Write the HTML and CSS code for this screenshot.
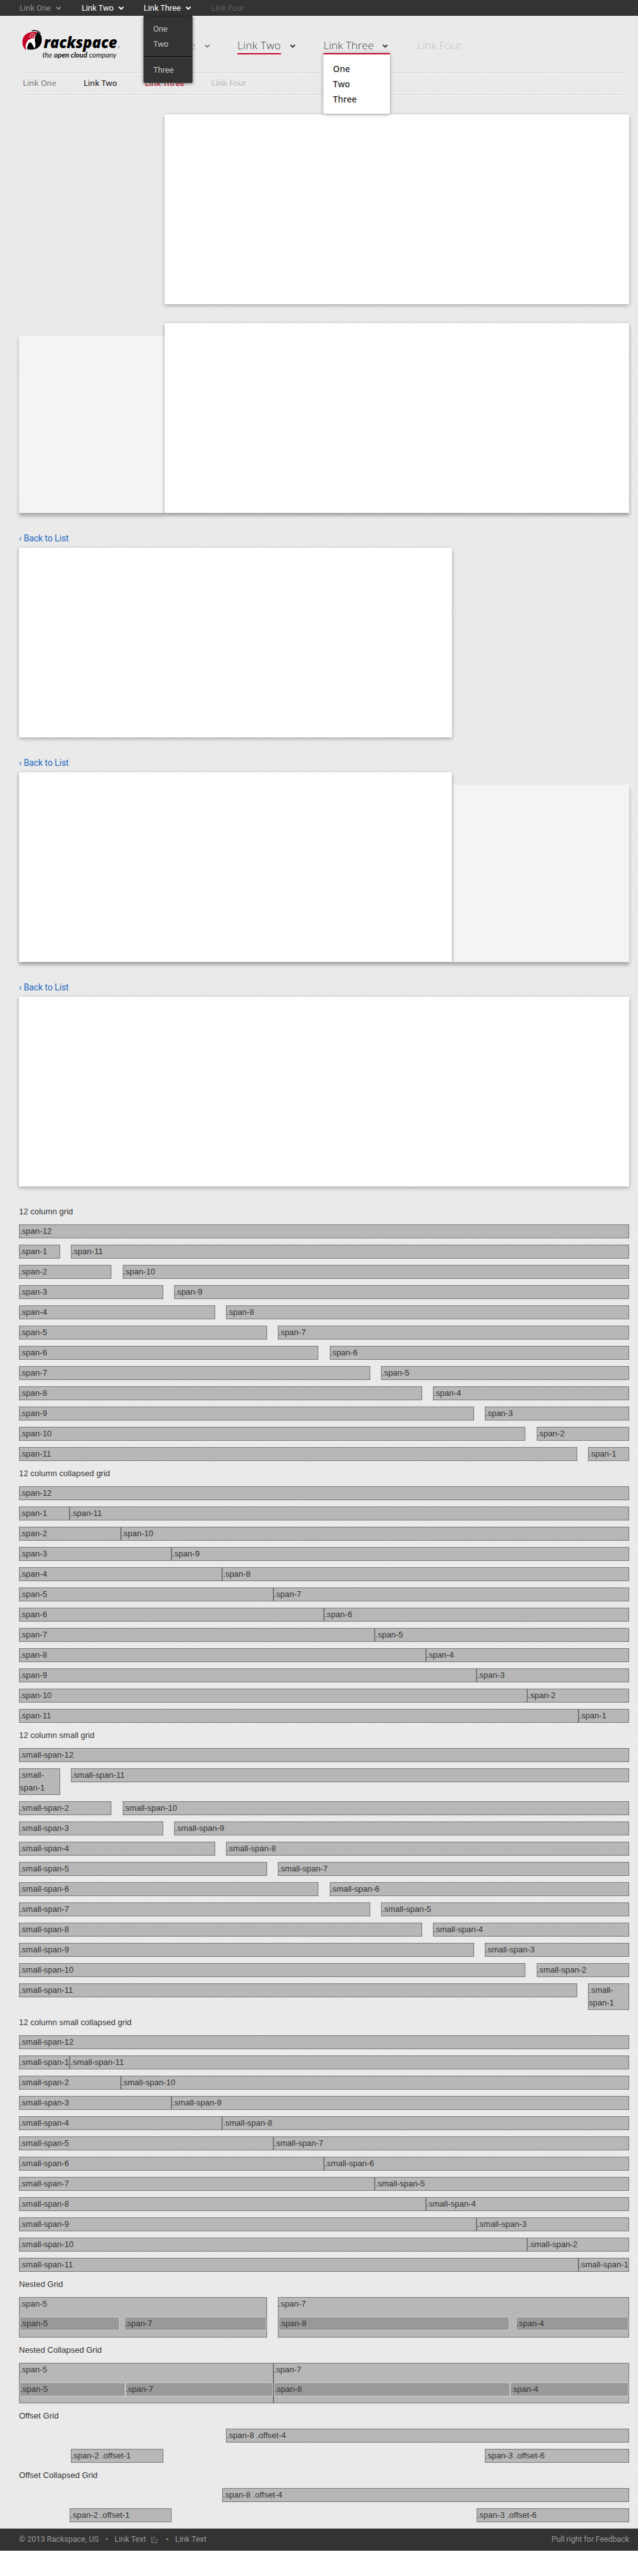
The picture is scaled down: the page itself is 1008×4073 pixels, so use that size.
FILE: index.html
```html
<!DOCTYPE html>
<html lang="en">
<head>
<meta charset="utf-8">
<title>Rackspace</title>
<link rel="stylesheet" href="styles.css">
</head>
<body>
<svg class="defs" width="0" height="0"><defs><symbol id="chevron" viewBox="0 0 9 6"><path d="M1 1l3.5 3.3L8 1" fill="none" stroke="currentColor" stroke-width="2"/></symbol></defs></svg>
<div class="page">
  <nav class="utility">
    <a class="utility-item muted">Link One <svg class="chev"><use href="#chevron"/></svg></a>
    <a class="utility-item active">Link Two <svg class="chev"><use href="#chevron"/></svg></a>
    <div class="utility-item active wide"><a>Link Three</a> <svg class="chev"><use href="#chevron"/></svg>
      <div class="utility-menu"><a>One</a><a>Two</a><hr><a>Three</a></div>
    </div>
    <a class="utility-item disabled">Link Four</a>
  </nav>
  <header class="header">
    <svg class="logo" width="160" height="50" viewBox="0 0 160 50">
      <path d="M28 3.500C33 6 35.500 11 35 17C34 27 27 31.500 18 31.500C15 31.500 13 31 11 30L15 17Z" fill="#000"/>
      <path d="M10.500 32.500C4 28 2.500 17 7 10.500C11 5 18 2.500 28 4L24 9C22 13 18 14 15 17C11 21 10 26 10.500 32.500Z" fill="#c40022"/>
      <path d="M28 4C25.500 8 24 12 24 17C25 21 26 25 23.500 30L21.500 26C20 22 17.500 19 15.500 20.500C13 22.500 12 26 11.500 30.500L10.500 32.500C8.500 26 10 20 14 16C19 14 24 10 28 4Z" fill="#fff"/>
      <circle cx="20.500" cy="9.500" r="4.200" fill="#c40022"/>
      <path d="M16.500 13C15.500 8 19 5 22 6.500C25 8.500 23 13 20.500 12C19 11 19.500 8.500 21 9" fill="none" stroke="#fff" stroke-width="1"/>
      <path d="M19 2C24 .3 30 1.500 33 6" fill="none" stroke="#000" stroke-width="1.300"/>
      <text class="logo-name" x="38" y="29" textLength="116" lengthAdjust="spacingAndGlyphs">rackspace</text>
      <text class="logo-dot" x="154.500" y="30">®</text>
      <text class="logo-tag" x="36" y="44" textLength="117" lengthAdjust="spacingAndGlyphs">the <tspan font-weight="700">open cloud</tspan> company</text>
    </svg>
    <nav class="primary">
      <div class="primary-item one muted"><a>Link One</a><svg class="chev"><use href="#chevron"/></svg></div>
      <div class="primary-item two"><a class="current">Link Two</a><svg class="chev"><use href="#chevron"/></svg></div>
      <div class="primary-item three"><a>Link Three</a><svg class="chev"><use href="#chevron"/></svg>
        <div class="primary-menu"><a>One</a><a>Two</a><a>Three</a></div>
      </div>
      <div class="primary-item disabled"><a>Link Four</a></div>
    </nav>
  </header>
  <nav class="secondary">
    <a class="muted">Link One</a><a>Link Two</a><a class="selected">Link Three</a><a class="disabled">Link Four</a>
  </nav>
  <main class="content">
    <section class="panels right"><div class="panel"></div></section>
    <section class="panels joined"><aside class="side left"></aside><div class="panel"></div></section>
    <a class="back">‹ Back to List</a>
    <section class="panels"><div class="panel detail"></div></section>
    <a class="back">‹ Back to List</a>
    <section class="panels joined"><div class="panel detail"></div><aside class="side"></aside></section>
    <a class="back">‹ Back to List</a>
    <section class="panels"><div class="panel"></div></section>

    <h2>12 column grid</h2>
    <div class="row"><div class="span-12">.span-12</div></div>
    <div class="row"><div class="span-1">.span-1</div><div class="span-11">.span-11</div></div>
    <div class="row"><div class="span-2">.span-2</div><div class="span-10">.span-10</div></div>
    <div class="row"><div class="span-3">.span-3</div><div class="span-9">.span-9</div></div>
    <div class="row"><div class="span-4">.span-4</div><div class="span-8">.span-8</div></div>
    <div class="row"><div class="span-5">.span-5</div><div class="span-7">.span-7</div></div>
    <div class="row"><div class="span-6">.span-6</div><div class="span-6">.span-6</div></div>
    <div class="row"><div class="span-7">.span-7</div><div class="span-5">.span-5</div></div>
    <div class="row"><div class="span-8">.span-8</div><div class="span-4">.span-4</div></div>
    <div class="row"><div class="span-9">.span-9</div><div class="span-3">.span-3</div></div>
    <div class="row"><div class="span-10">.span-10</div><div class="span-2">.span-2</div></div>
    <div class="row"><div class="span-11">.span-11</div><div class="span-1">.span-1</div></div>

    <h2>12 column collapsed grid</h2>
    <div class="row collapsed"><div class="span-12">.span-12</div></div>
    <div class="row collapsed"><div class="span-1">.span-1</div><div class="span-11">.span-11</div></div>
    <div class="row collapsed"><div class="span-2">.span-2</div><div class="span-10">.span-10</div></div>
    <div class="row collapsed"><div class="span-3">.span-3</div><div class="span-9">.span-9</div></div>
    <div class="row collapsed"><div class="span-4">.span-4</div><div class="span-8">.span-8</div></div>
    <div class="row collapsed"><div class="span-5">.span-5</div><div class="span-7">.span-7</div></div>
    <div class="row collapsed"><div class="span-6">.span-6</div><div class="span-6">.span-6</div></div>
    <div class="row collapsed"><div class="span-7">.span-7</div><div class="span-5">.span-5</div></div>
    <div class="row collapsed"><div class="span-8">.span-8</div><div class="span-4">.span-4</div></div>
    <div class="row collapsed"><div class="span-9">.span-9</div><div class="span-3">.span-3</div></div>
    <div class="row collapsed"><div class="span-10">.span-10</div><div class="span-2">.span-2</div></div>
    <div class="row collapsed"><div class="span-11">.span-11</div><div class="span-1">.span-1</div></div>

    <h2>12 column small grid</h2>
    <div class="row"><div class="span-12">.small-span-12</div></div>
    <div class="row"><div class="span-1">.small-span-1</div><div class="span-11">.small-span-11</div></div>
    <div class="row"><div class="span-2">.small-span-2</div><div class="span-10">.small-span-10</div></div>
    <div class="row"><div class="span-3">.small-span-3</div><div class="span-9">.small-span-9</div></div>
    <div class="row"><div class="span-4">.small-span-4</div><div class="span-8">.small-span-8</div></div>
    <div class="row"><div class="span-5">.small-span-5</div><div class="span-7">.small-span-7</div></div>
    <div class="row"><div class="span-6">.small-span-6</div><div class="span-6">.small-span-6</div></div>
    <div class="row"><div class="span-7">.small-span-7</div><div class="span-5">.small-span-5</div></div>
    <div class="row"><div class="span-8">.small-span-8</div><div class="span-4">.small-span-4</div></div>
    <div class="row"><div class="span-9">.small-span-9</div><div class="span-3">.small-span-3</div></div>
    <div class="row"><div class="span-10">.small-span-10</div><div class="span-2">.small-span-2</div></div>
    <div class="row"><div class="span-11">.small-span-11</div><div class="span-1">.small-span-1</div></div>

    <h2>12 column small collapsed grid</h2>
    <div class="row collapsed"><div class="span-12">.small-span-12</div></div>
    <div class="row collapsed"><div class="span-1">.small-span-1</div><div class="span-11">.small-span-11</div></div>
    <div class="row collapsed"><div class="span-2">.small-span-2</div><div class="span-10">.small-span-10</div></div>
    <div class="row collapsed"><div class="span-3">.small-span-3</div><div class="span-9">.small-span-9</div></div>
    <div class="row collapsed"><div class="span-4">.small-span-4</div><div class="span-8">.small-span-8</div></div>
    <div class="row collapsed"><div class="span-5">.small-span-5</div><div class="span-7">.small-span-7</div></div>
    <div class="row collapsed"><div class="span-6">.small-span-6</div><div class="span-6">.small-span-6</div></div>
    <div class="row collapsed"><div class="span-7">.small-span-7</div><div class="span-5">.small-span-5</div></div>
    <div class="row collapsed"><div class="span-8">.small-span-8</div><div class="span-4">.small-span-4</div></div>
    <div class="row collapsed"><div class="span-9">.small-span-9</div><div class="span-3">.small-span-3</div></div>
    <div class="row collapsed"><div class="span-10">.small-span-10</div><div class="span-2">.small-span-2</div></div>
    <div class="row collapsed"><div class="span-11">.small-span-11</div><div class="span-1">.small-span-1</div></div>

    <h2>Nested Grid</h2>
    <div class="row">
      <div class="span-5">.span-5<div class="row nested"><div class="span-5">.span-5</div><div class="span-7">.span-7</div></div></div>
      <div class="span-7">.span-7<div class="row nested"><div class="span-8">.span-8</div><div class="span-4">.span-4</div></div></div>
    </div>
    <h2>Nested Collapsed Grid</h2>
    <div class="row collapsed">
      <div class="span-5">.span-5<div class="row collapsed nested"><div class="span-5">.span-5</div><div class="span-7">.span-7</div></div></div>
      <div class="span-7">.span-7<div class="row collapsed nested"><div class="span-8">.span-8</div><div class="span-4">.span-4</div></div></div>
    </div>
    <h2>Offset Grid</h2>
    <div class="row"><div class="span-8 from-5">.span-8 .offset-4</div></div>
    <div class="row"><div class="span-2 from-2">.span-2 .offset-1</div><div class="span-3 from-10">.span-3 .offset-6</div></div>
    <h2>Offset Collapsed Grid</h2>
    <div class="row collapsed"><div class="span-8 from-5">.span-8 .offset-4</div></div>
    <div class="row collapsed"><div class="span-2 from-2">.span-2 .offset-1</div><div class="span-3 from-10">.span-3 .offset-6</div></div>
  </main>
</div>
<footer class="footer">
  <span class="copyright">© 2013 Rackspace, US</span><span class="dot">•</span>
  <a>Link Text</a>
  <svg class="external" width="13" height="13" viewBox="0 0 13 13"><path d="M0 3h2v8h8v2H0z" fill="#666"/><path d="M3 .5h9.500v9.500H3z" fill="#555" stroke="#1f1f1f"/><path d="M5 8l5-5M6.500 2.500h4v4" fill="none" stroke="#1c1c1c" stroke-width="1.300"/></svg>
  <span class="dot">•</span><a>Link Text</a>
  <a class="feedback">Pull right for Feedback</a>
</footer>
</body>
</html>
```
FILE: styles.css
```css
* { box-sizing: border-box; }
body {
  margin: 0;
  background: #fff;
  color: #333;
  font: 13px/20px "Liberation Sans", Arial, sans-serif;
}
.defs { position: absolute; }
.page {
  background: #ebebeb url("data:image/svg+xml,%3Csvg xmlns='http://www.w3.org/2000/svg' width='200' height='200'%3E%3Cfilter id='n'%3E%3CfeTurbulence type='fractalNoise' baseFrequency='.5' numOctaves='3' stitchTiles='stitch'/%3E%3CfeColorMatrix type='saturate' values='0'/%3E%3C/filter%3E%3Crect width='200' height='200' filter='url(%23n)' opacity='.04'/%3E%3C/svg%3E");
}
.chev { width: 9px; height: 6px; overflow: visible; }

/* Utility bar */
.utility {
  display: flex;
  height: 25px;
  padding-left: 31px;
  background: #333;
  font: 13px/25px Roboto, sans-serif;
  letter-spacing: -.15px;
}
.utility-item {
  position: relative;
  display: flex;
  align-items: center;
  gap: 8px;
  width: 98px;
  white-space: nowrap;
}
.utility-item.wide { width: 107px; }
.utility .muted { color: #8c8c8c; }
.utility .active { color: #fff; }
.utility .disabled { color: #5c5c5c; }
.utility-menu {
  position: absolute;
  z-index: 5;
  left: -1px;
  top: 25px;
  width: 79px;
  height: 107px;
  padding-top: 8px;
  border: 1px solid #8d8d8d;
  border-top-color: #222;
  border-radius: 3px;
  background: #333;
  box-shadow: 0 1px 5px rgba(0, 0, 0, .35);
  color: #c4c4c4;
}
.utility-menu a { display: block; padding-left: 15px; line-height: 24px; }
.utility-menu hr { height: 2px; margin: 7px 0 8px; border: 0; border-top: 1px solid #000; background: #484848; }

/* Header */
.header { display: flex; height: 89px; padding-left: 31px; }
.logo { flex: none; margin-top: 22px; overflow: visible; }
.logo-name { font: italic 800 25px "Open Sans", sans-serif; }
.logo-dot { font: 5px "Open Sans", sans-serif; fill: #888; }
.logo-tag { font: italic 400 10.5px Lato, sans-serif; fill: #111; }
.primary {
  display: flex;
  padding: 34px 0 0 50px;
  font: 300 17px/25px "Open Sans", sans-serif;
  text-shadow: 0 1px 0 #fff;
}
.primary-item { position: relative; display: flex; height: 27px; gap: 14px; white-space: nowrap; }
.primary-item .chev { margin-top: 11px; }
.primary-item.one { width: 134px; }
.primary-item.two { width: 136px; letter-spacing: .3px; }
.primary-item.three { width: 148px; }
.primary .muted { color: #808080; }
.primary .disabled { color: #b4b4b4; }
.primary .current { border-bottom: 2px solid #c40022; }
.primary-menu {
  position: absolute;
  z-index: 4;
  left: 0;
  top: 25px;
  width: 105px;
  height: 96px;
  padding: 11px 0 0 15px;
  border-top: 2px solid #c40022;
  border-radius: 0 0 3px 3px;
  background: #fff;
  box-shadow: 0 1px 6px rgba(0, 0, 0, .35);
  font-weight: 600;
  font-size: 13.5px;
  line-height: 24px;
}
.primary-menu a { display: block; }

/* Secondary navigation */
.secondary {
  display: grid;
  grid-template-columns: 96px 97px 105px auto;
  height: 36px;
  margin: 0 14px 0 30px;
  padding-left: 6px;
  border-top: 1px solid #d6d6d6;
  border-bottom: 1px solid #d6d6d6;
  box-shadow: inset 0 1px #f5f5f5, 0 1px #f5f5f5;
  font: 600 12.5px/34px "Open Sans", sans-serif;
  letter-spacing: -.1px;
  text-shadow: 0 1px 0 #fff;
}
.secondary .muted { color: #888; }
.secondary .selected { color: #c40022; }
.secondary .disabled { color: #bbb; }

/* Panels */
.content { padding: 31px 14px .1px 30px; }
.panels { display: flex; align-items: flex-end; }
.panels.right { justify-content: flex-end; margin-bottom: 30px; }
.panel { position: relative; flex: 1; height: 300px; background: #fff; box-shadow: 0 2px 6px rgba(0, 0, 0, .3); }
.right .panel { flex: 0 0 734px; }
.panel.detail { flex: 0 0 684px; }
.side { flex: 1; height: 280px; background: #f4f4f4; }
.side.left { flex: 0 0 230px; }
.joined .panel { box-shadow: 0 1px 5px rgba(0, 0, 0, .22), 0 5px 5px rgba(0, 0, 0, .22); }
.joined .side { box-shadow: 0 5px 5px rgba(0, 0, 0, .28); }
.back {
  display: block;
  height: 20px;
  margin: 35px 0 0;
  color: #1c69c0;
  font: 14px/10px Roboto, sans-serif;
  letter-spacing: -.15px;
}

/* Grid samples */
h2 { height: 20px; margin: 0 0 10px; font-size: 13px; font-weight: 400; }
.panels + h2 { margin-top: 30px; }
.row {
  display: grid;
  grid-template-columns: repeat(12, minmax(0, 1fr));
  column-gap: 1.77%;
  align-items: start;
  margin-bottom: 10px;
}
.row > div { border: 1px solid #777; background: #b7b7b7; }
.collapsed { column-gap: 0; white-space: nowrap; }
.row > .nested { margin-top: 10px; }
.nested { margin-top: 10px; }
.nested > div { border-color: #ccc; background: #999; }
.span-1 { grid-column-end: span 1; }
.span-2 { grid-column-end: span 2; }
.span-3 { grid-column-end: span 3; }
.span-4 { grid-column-end: span 4; }
.span-5 { grid-column-end: span 5; }
.span-6 { grid-column-end: span 6; }
.span-7 { grid-column-end: span 7; }
.span-8 { grid-column-end: span 8; }
.span-9 { grid-column-end: span 9; }
.span-10 { grid-column-end: span 10; }
.span-11 { grid-column-end: span 11; }
.span-12 { grid-column-end: span 12; }
.from-2 { grid-column-start: 2; }
.from-5 { grid-column-start: 5; }
.from-10 { grid-column-start: 10; }

/* Footer */
.footer {
  display: flex;
  align-items: center;
  height: 35px;
  padding: 0 14px 2px 30px;
  background: #333;
  color: #999;
  font: 12.5px/20px Roboto, sans-serif;
}
.dot { width: 25px; text-align: center; }
.external { flex: none; margin-left: 8px; }
.feedback { margin-left: auto; letter-spacing: -.1px; }
```
